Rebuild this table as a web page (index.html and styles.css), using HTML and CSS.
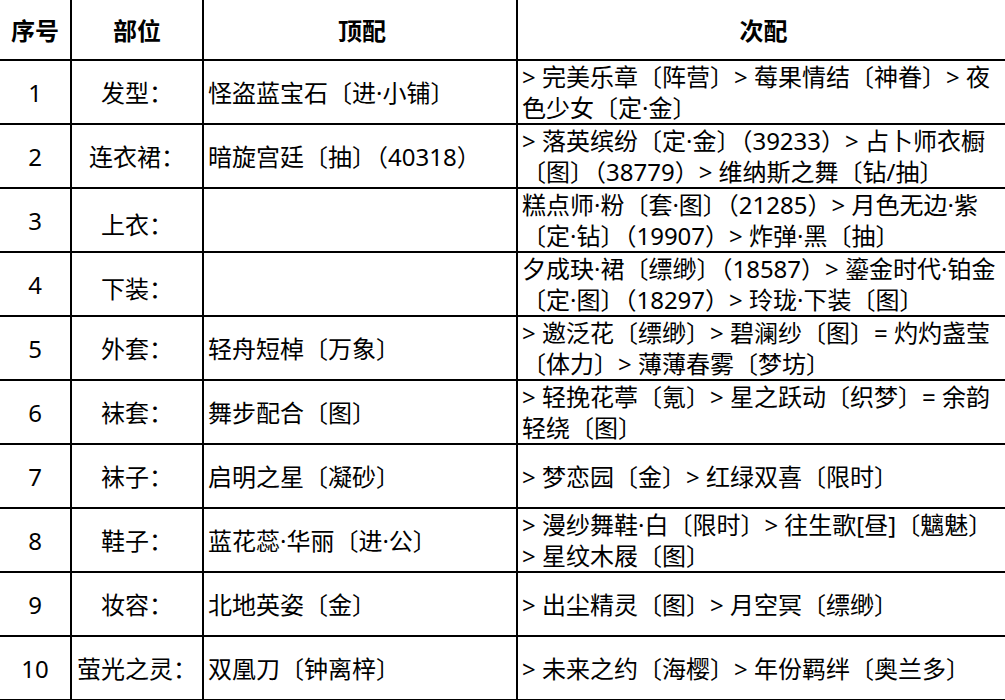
FILE: index.html
```html
<!DOCTYPE html>
<html lang="zh">
<head>
<meta charset="utf-8">
<link rel="stylesheet" href="styles.css">
</head>
<body>
<div class="sheet">
  <div class="c h n">序号</div><div class="c h p">部位</div><div class="c h t">顶配</div><div class="c h s">次配</div>

  <div class="c n">1</div><div class="c p">发型：</div><div class="c t">怪盗蓝宝石〔进·小铺〕</div><div class="c s">&gt; 完美乐章〔阵营〕&gt; 莓果情结〔神眷〕&gt; 夜<br>色少女〔定·金〕</div>

  <div class="c n">2</div><div class="c p">连衣裙：</div><div class="c t">暗旋宫廷〔抽〕（40318）</div><div class="c s">&gt; 落英缤纷〔定·金〕（39233）&gt; 占卜师衣橱<br>〔图〕（38779）&gt; 维纳斯之舞〔钻/抽〕</div>

  <div class="c n">3</div><div class="c p low">上衣：</div><div class="c t"></div><div class="c s">糕点师·粉〔套·图〕（21285）&gt; 月色无边·紫<br>〔定·钻〕（19907）&gt; 炸弹·黑〔抽〕</div>

  <div class="c n">4</div><div class="c p low">下装：</div><div class="c t"></div><div class="c s">夕成玦·裙〔缥缈〕（18587）&gt; 鎏金时代·铂金<br>〔定·图〕（18297）&gt; 玲珑·下装〔图〕</div>

  <div class="c n">5</div><div class="c p">外套：</div><div class="c t">轻舟短棹〔万象〕</div><div class="c s">&gt; 邀泛花〔缥缈〕&gt; 碧澜纱〔图〕= 灼灼盏莹<br>〔体力〕&gt; 薄薄春雾〔梦坊〕</div>

  <div class="c n">6</div><div class="c p">袜套：</div><div class="c t">舞步配合〔图〕</div><div class="c s">&gt; 轻挽花葶〔氪〕&gt; 星之跃动〔织梦〕= 余韵<br>轻绕〔图〕</div>

  <div class="c n">7</div><div class="c p">袜子：</div><div class="c t">启明之星〔凝砂〕</div><div class="c s">&gt; 梦恋园〔金〕&gt; 红绿双喜〔限时〕</div>

  <div class="c n">8</div><div class="c p">鞋子：</div><div class="c t">蓝花蕊·华丽〔进·公〕</div><div class="c s">&gt; 漫纱舞鞋·白〔限时〕&gt; 往生歌[昼]〔魑魅〕<br>&gt; 星纹木屐〔图〕</div>

  <div class="c n">9</div><div class="c p">妆容：</div><div class="c t">北地英姿〔金〕</div><div class="c s">&gt; 出尘精灵〔图〕&gt; 月空冥〔缥缈〕</div>

  <div class="c n">10</div><div class="c p">萤光之灵：</div><div class="c t">双凰刀〔钟离梓〕</div><div class="c s">&gt; 未来之约〔海樱〕&gt; 年份羁绊〔奥兰多〕</div>
</div>
</body>
</html>
```
FILE: styles.css
```css
html, body {
  margin: 0;
  padding: 0;
  background: #ffffff;
}
body {
  width: 1005px;
  height: 700px;
  overflow: hidden;
  font-family: "Noto Sans", "Noto Sans CJK SC", sans-serif;
  color: #000;
}
.sheet {
  display: grid;
  grid-template-columns: 72px 132px 314px 487px;
  grid-template-rows: 61px repeat(10, 64px);
}
.c {
  box-sizing: border-box;
  border-right: 2px solid #000;
  border-bottom: 2px solid #000;
  display: flex;
  align-items: center;
  font-size: 24px;
  line-height: 31px;
  white-space: nowrap;
  overflow: hidden;
}
.s {
  border-right: none;
  padding-left: 4px;
}
.n, .p {
  justify-content: center;
}
.t {
  padding-left: 4px;
}
.h {
  font-weight: bold;
  justify-content: center;
  font-family: "Noto Sans CJK SC", sans-serif;
}
.low {
  padding-top: 8px;
}
```
